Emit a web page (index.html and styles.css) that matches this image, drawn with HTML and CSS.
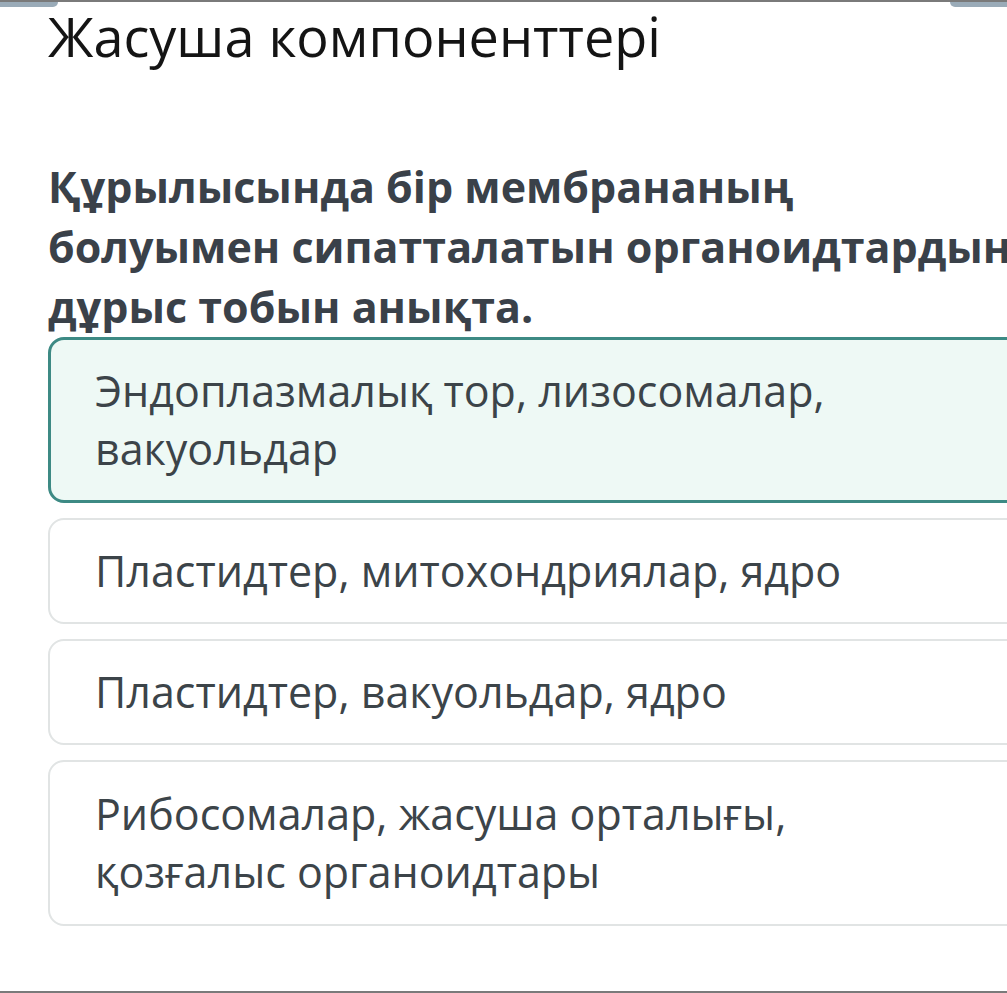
FILE: index.html
```html
<!DOCTYPE html>
<html lang="kk">
<head>
<meta charset="utf-8">
<link rel="stylesheet" href="styles.css">
</head>
<body>
<div class="topbar">
  <span class="tab tab-left"></span>
  <span class="tab tab-right"></span>
</div>
<main class="page">
  <h1 class="title">Жасуша компоненттері</h1>
  <p class="question">Құрылысында бір мембрананың<br>болуымен сипатталатын органоидтардың<br>дұрыс тобын анықта.</p>
  <div class="options">
    <div class="option selected">Эндоплазмалық тор, лизосомалар,<br>вакуольдар</div>
    <div class="option">Пластидтер, митохондриялар, ядро</div>
    <div class="option">Пластидтер, вакуольдар, ядро</div>
    <div class="option tall">Рибосомалар, жасуша орталығы,<br>қозғалыс органоидтары</div>
  </div>
</main>
<div class="bottombar"></div>
</body>
</html>
```
FILE: styles.css
```css
html, body {
  margin: 0;
  padding: 0;
  background: #ffffff;
  overflow: hidden;
  width: 1007px;
  height: 993px;
}
body {
  position: relative;
  font-family: "Open Sans", "Noto Sans", sans-serif;
}
.topbar {
  height: 2px;
  background: #7a7a7a;
  position: relative;
}
.tab {
  position: absolute;
  top: 2px;
  height: 5px;
  background: #9aabb8;
}
.tab-left {
  left: 0;
  width: 58px;
  border-bottom-right-radius: 6px;
}
.tab-right {
  right: 0;
  width: 57px;
  border-bottom-left-radius: 6px;
}
.page {
  padding: 0 0 0 48px;
}
.title {
  margin: 0;
  font-weight: 400;
  font-size: 54px;
  line-height: 68px;
  color: #141414;
}
.question {
  margin: 87px 0 0 0;
  font-weight: 700;
  font-size: 43px;
  line-height: 60px;
  color: #3a4149;
  white-space: nowrap;
}
.options {
  display: flex;
  flex-direction: column;
  gap: 15px;
  width: 975px;
}
.option {
  border: 2px solid #e1e4e4;
  border-radius: 16px;
  padding: 22px 45px;
  font-size: 43px;
  line-height: 58px;
  color: #3c4449;
  white-space: nowrap;
  background: #ffffff;
}
.option.selected {
  border: 3px solid #3d8a84;
  padding: 22px 44px;
  background: #eef9f5;
}
.option.tall {
  padding: 23px 45px;
}
.bottombar {
  position: absolute;
  left: 0;
  right: 0;
  bottom: 0;
  height: 2px;
  background: #7a7a7a;
}
```
